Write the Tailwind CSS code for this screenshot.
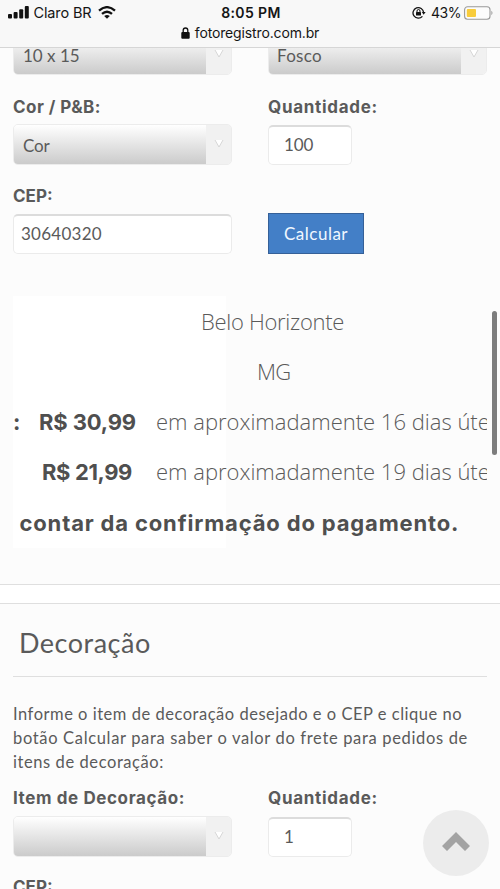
<!DOCTYPE html>
<html lang="pt-BR">
<head>
<meta charset="utf-8">
<title>Foto Registro</title>
<script src="https://cdn.jsdelivr.net/npm/@tailwindcss/browser@4"></script>
</head>
<body class="relative h-[889px] w-[500px] overflow-hidden bg-[#fcfcfc] font-['Lato','Liberation_Sans',sans-serif] text-[17px] text-[#5a5a5a]">

<header class="h-[48px] border-b border-[#d6d6d6] bg-[#f8f8f8] font-['Inter','Liberation_Sans',sans-serif] text-[14px] text-[#151515]">
  <div class="grid h-[25px] grid-cols-3 items-center pl-2 pr-[6px]">
    <div class="flex items-center">
      <svg class="h-[13px] w-[21px]" viewBox="0 0 21 13" fill="#111"><rect x="0" y="8" width="4" height="4.500" rx="1"/><rect x="5.600" y="6" width="4" height="6.500" rx="1"/><rect x="11.200" y="3.200" width="4" height="9.300" rx="1"/><rect x="16.800" y="0" width="4" height="12.500" rx="1"/></svg>
      <span class="ml-[4.500px] whitespace-nowrap text-[14.500px] leading-5 tracking-[-0.13px]">Claro BR</span>
      <svg class="ml-[6px] h-[13px] w-[18px] shrink-0" viewBox="0 0 18 13" fill="none" stroke="#111" stroke-width="2.300"><path d="M1 4.700Q9-2.400 17 4.700"/><path d="M4 7.900Q9 3.500 14 7.900"/><path d="M9 12.800 6.200 10Q9 7.800 11.800 10Z" fill="#111" stroke="none"/></svg>
    </div>
    <div class="text-center font-semibold leading-5 tracking-[0.4px]">8:05 PM</div>
    <div class="flex items-center justify-end">
      <svg class="h-[13px] w-[14px]" viewBox="0 0 14 13" fill="none" stroke="#111" stroke-width="1.300"><path d="M10.400 10.300A5.300 5.300 0 1 1 11.600 6.500"/><path d="M9.800 6H13.600L11.700 8.700Z" fill="#111" stroke="none"/><rect x="4" y="5.900" width="5" height="3.600" rx=".6" fill="#111" stroke="none"/><path d="M5 6V5a1.500 1.500 0 0 1 3 0V6" stroke-width="1"/></svg>
      <span class="ml-[5px] leading-5 tracking-[-0.45px]">43%</span>
      <svg class="ml-[3px] h-[14px] w-[30px]" viewBox="0 0 30 14"><rect x=".6" y=".8" width="25.400" height="12.400" rx="3" fill="#fcfcfc" stroke="#999" stroke-width="1.100"/><rect x="2.800" y="3" width="9.200" height="8" rx="1" fill="#f8cc3c"/><path d="M27.400 4.800Q29.600 7 27.400 9.200Z" fill="#999"/></svg>
    </div>
  </div>
  <div class="flex h-[15px] items-center justify-center">
    <svg class="mr-[6px] h-[12px] w-[9px]" viewBox="0 0 9 12"><rect x=".3" y="5" width="8.400" height="6.700" rx="1" fill="#111"/><path d="M2.200 5.500V3.300a2.300 2.300 0 0 1 4.600 0V5.500" fill="none" stroke="#111" stroke-width="1.300"/></svg>
    <span class="-ml-px leading-5 tracking-[-0.14px]">fotoregistro.com.br</span>
  </div>
</header>

<main>
  <section class="h-[536px] px-[13px]">
    <div class="h-[27px] overflow-hidden">
    <div class="-mt-[14px] grid grid-cols-[255px_219px]">
      <div class="flex h-[41px] w-[219px] overflow-hidden rounded-[5px] border border-[#ececec]">
        <div class="flex-1 bg-linear-to-b from-white to-[#cbcbcb] pl-[9px] pt-[2px] leading-[37px]">10 x 15</div>
        <div class="flex w-[25px] justify-center bg-[#f1f1f1] pt-[14px]"><svg class="h-[9px] w-[10px]" viewBox="0 0 10 9" fill="#fff" stroke="#d6d6d6"><path d="M1 1 5 8 9 1"/></svg></div>
      </div>
      <div class="flex h-[41px] w-[219px] overflow-hidden rounded-[5px] border border-[#ececec]">
        <div class="flex-1 bg-linear-to-b from-white to-[#cbcbcb] pl-[8px] pt-[2px] leading-[37px] tracking-[0.3px]">Fosco</div>
        <div class="flex w-[25px] justify-center bg-[#f1f1f1] pt-[14px]"><svg class="h-[9px] w-[10px]" viewBox="0 0 10 9" fill="#fff" stroke="#d6d6d6"><path d="M1 1 5 8 9 1"/></svg></div>
      </div>
    </div>
    </div>

    <div class="mt-[21px] grid grid-cols-[255px_219px]">
      <div>
        <div class="h-7 pt-px font-['Inter','Liberation_Sans',sans-serif] font-bold leading-5 tracking-[0.46px]">Cor / P&amp;B:</div>
        <div class="flex h-[41px] w-[219px] overflow-hidden rounded-[5px] border border-[#ececec]">
          <div class="flex-1 bg-linear-to-b from-white to-[#cbcbcb] pl-[9px] pt-[2px] leading-[37px] tracking-[-0.2px]">Cor</div>
          <div class="flex w-[25px] justify-center bg-[#f1f1f1] pt-[14px]"><svg class="h-[9px] w-[10px]" viewBox="0 0 10 9" fill="#fff" stroke="#d6d6d6"><path d="M1 1 5 8 9 1"/></svg></div>
        </div>
      </div>
      <div>
        <div class="h-7 pt-px font-['Inter','Liberation_Sans',sans-serif] font-bold leading-5 tracking-[0.7px]">Quantidade:</div>
        <div class="mt-px h-10 w-[84px] rounded-[5px] border border-t-[2px] border-[#ebebeb] border-t-[#dcdcdc] bg-white pl-[15px] leading-[35px] tracking-[-0.1px]">100</div>
      </div>
    </div>

    <div class="mt-[20px] grid grid-cols-[255px_219px]">
      <div>
        <div class="h-[29px] pt-px font-['Inter','Liberation_Sans',sans-serif] font-bold leading-5">CEP:</div>
        <div class="h-10 w-[219px] rounded-[5px] border border-t-[2px] border-[#ebebeb] border-t-[#dcdcdc] bg-white pl-[7px] leading-[36px] tracking-[0.26px]">30640320</div>
      </div>
      <div class="pt-7">
        <button class="block h-[41px] w-[96px] border border-[#356098] bg-[#437fc7] text-center leading-[39px] tracking-[0.5px] text-[#f0f7ff]">Calcular</button>
      </div>
    </div>

    <div class="mt-[42px] h-[252px] w-[474px] overflow-hidden whitespace-nowrap bg-linear-to-r from-white from-[213px] to-transparent to-[213px] font-['Open_Sans','Lato',sans-serif] text-[22px] font-light leading-[50px]">
      <div class="h-[50px] pl-[188px] tracking-[-0.3px]">Belo Horizonte</div>
      <div class="h-[50px] pl-[244px] tracking-[-0.8px]">MG</div>
      <div class="flex h-[50px]">
        <b class="w-[26px] shrink-0 pt-px font-['Inter','Liberation_Sans',sans-serif] font-bold text-[#4f4f4f]">:</b>
        <b class="w-[117px] shrink-0 pt-px font-['Inter','Liberation_Sans',sans-serif] font-bold tracking-[-0.14px] text-[#4f4f4f]">R$ 30,99</b>
        <span>em aproximadamente 16 dias úteis</span>
      </div>
      <div class="flex h-[50px]">
        <b class="w-[143px] shrink-0 pl-[29px] pt-px font-['Inter','Liberation_Sans',sans-serif] font-bold tracking-[-0.38px] text-[#4f4f4f]">R$ 21,99</b>
        <span>em aproximadamente 19 dias úteis</span>
      </div>
      <div class="h-[52px] pl-[6.500px] pt-[2px] font-['Inter','Liberation_Sans',sans-serif] font-bold tracking-[0.84px] text-[#4f4f4f]">contar da confirmação do pagamento.</div>
    </div>
  </section>

  <div class="h-[20px] border-y border-[#dfdfdf] bg-white"></div>

  <section class="px-[13px]">
    <h2 class="h-[73px] border-b border-[#dfdfdf] pl-[6px] text-[27px] leading-[78px] tracking-[0.5px]">Decoração</h2>
    <p class="mt-6 whitespace-nowrap pt-px text-[16.500px] leading-[24.200px] tracking-[0.52px]">Informe o item de decoração desejado e o CEP e clique no<br><span class="tracking-[0.66px]">botão Calcular para saber o valor do frete para pedidos de</span><br><span class="tracking-[0.58px]">itens de decoração:</span></p>
    <div class="mt-[13px] grid grid-cols-[255px_219px]">
      <div>
        <div class="h-7 font-['Inter','Liberation_Sans',sans-serif] font-bold leading-5 tracking-[0.6px]">Item de Decoração:</div>
        <div class="flex h-[41px] w-[219px] overflow-hidden rounded-[5px] border border-[#ececec]">
          <div class="flex-1 bg-linear-to-b from-white to-[#cbcbcb]"></div>
          <div class="flex w-[25px] justify-center bg-[#f1f1f1] pt-[14px]"><svg class="h-[9px] w-[10px]" viewBox="0 0 10 9" fill="#fff" stroke="#d6d6d6"><path d="M1 1 5 8 9 1"/></svg></div>
        </div>
        <div class="mt-[20px] font-['Inter','Liberation_Sans',sans-serif] font-bold leading-5">CEP:</div>
      </div>
      <div>
        <div class="h-7 font-['Inter','Liberation_Sans',sans-serif] font-bold leading-5 tracking-[0.7px]">Quantidade:</div>
        <div class="mt-px h-10 w-[84px] rounded-[5px] border border-t-[2px] border-[#ebebeb] border-t-[#dcdcdc] bg-white pl-[15px] leading-[35px]">1</div>
      </div>
    </div>
  </section>
</main>

<div class="absolute left-[492px] top-[311px] h-[144px] w-[5px] rounded-full bg-[#7d7d7d]"></div>
<button class="absolute left-[423px] top-[810px] flex size-[66px] items-center justify-center rounded-full bg-[#ececec]" aria-label="Topo">
  <svg class="-mt-[4px] h-[19px] w-[28px]" viewBox="0 0 28 19" fill="#a3a3a3"><path d="M14 0 28 14 23 19 14 10 5 19 0 14Z"/></svg>
</button>
</body>
</html>
